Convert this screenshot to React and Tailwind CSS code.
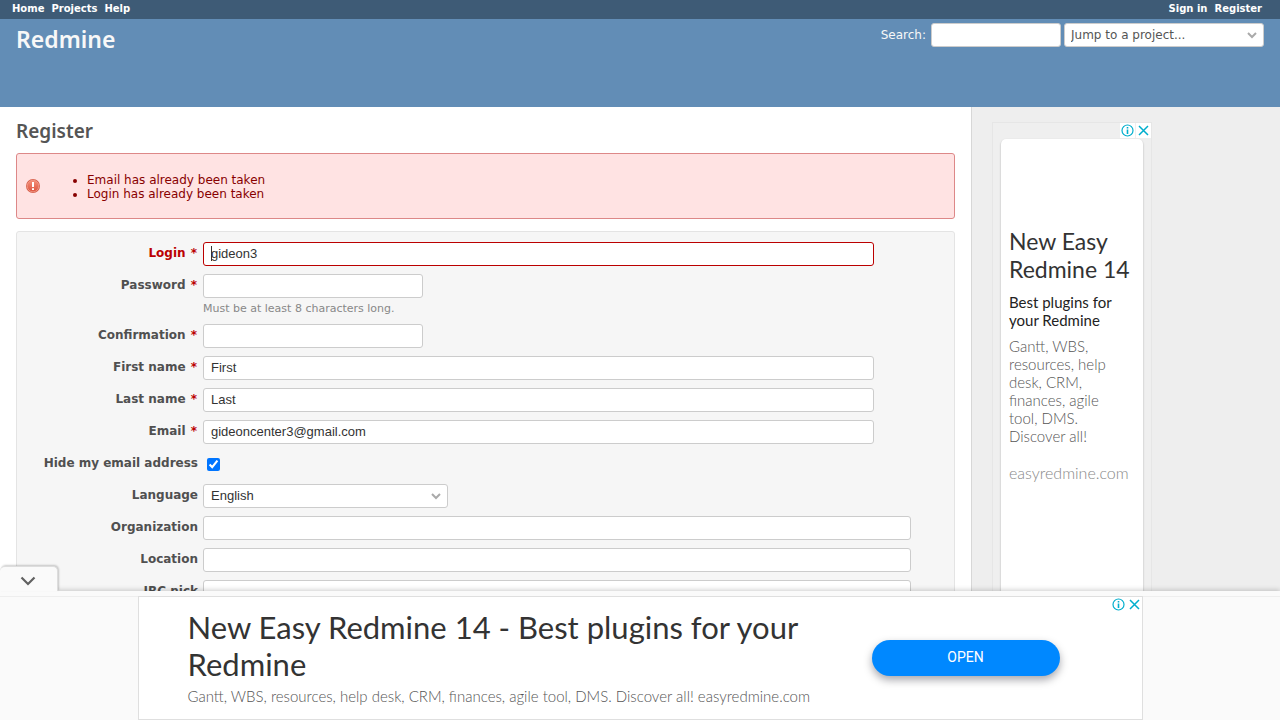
import React from "react";

const fieldBase =
  "block h-6 rounded-[3px] border bg-white px-[7px] font-['Liberation_Sans',Arial,sans-serif] text-[13px] text-[#333333] outline-none";
const textBox = fieldBase + " border-[#cccccc] pb-0.5";
const errorBox = fieldBase + " border-[#bb0000] pb-0.5";

function Row({ id, label, required, error, children }) {
  return (
    <div className="flex items-start gap-[5px]">
      <label
        htmlFor={id}
        className={
          "w-[175px] shrink-0 pt-[3px] text-right text-[12px] leading-4 font-bold whitespace-nowrap " +
          (error ? "text-[#bb0000]" : "text-[#505050]")
        }
      >
        {label}
        {required && <span className="mr-px ml-px text-[#bb0000]"> *</span>}
      </label>
      <div className="relative min-w-0 flex-1">{children}</div>
    </div>
  );
}

function Chevron() {
  return (
    <svg
      className="pointer-events-none absolute top-[7px] right-[7px] h-2.5 w-2.5"
      viewBox="0 0 10 10"
      fill="none"
      stroke="#aaaaaa"
      strokeWidth="2"
      aria-hidden="true"
    >
      <path d="M1 3 L5 7 L9 3" />
    </svg>
  );
}

function AdMarks() {
  return (
    <div className="flex gap-px">
      <button type="button" aria-label="Ad information" className="flex size-[15px] items-center justify-center bg-white">
        <svg width="15" height="15" viewBox="0 0 15 15" fill="none" stroke="#00aecd" aria-hidden="true">
          <circle cx="7.5" cy="7.5" r="5.5" strokeWidth="1.2" />
          <path d="M7.5 6.5 V11" strokeWidth="1.6" />
          <path d="M7.5 4 V5.5" strokeWidth="1.6" />
        </svg>
      </button>
      <button type="button" aria-label="Close ad" className="flex size-[15px] items-center justify-center bg-white">
        <svg width="15" height="15" viewBox="0 0 15 15" fill="none" stroke="#00aecd" strokeWidth="1.5" aria-hidden="true">
          <path d="M3 3 L12 12 M12 3 L3 12" />
        </svg>
      </button>
    </div>
  );
}

export default function App() {
  return (
    <div className="flex h-screen flex-col overflow-hidden bg-[#eeeeee] font-['DejaVu_Sans',Verdana,sans-serif] text-[12px] text-[#333333]">
      <nav className="flex h-[19px] shrink-0 items-center justify-between bg-[#3e5b76] pr-[18px] pb-px pl-3 text-[10px] leading-4 font-bold text-white">
        <div className="flex gap-[7px]">
          <a href="#home">Home</a>
          <a href="#projects">Projects</a>
          <a href="#help">Help</a>
        </div>
        <div className="flex gap-[7px]">
          <a href="#signin">Sign in</a>
          <a href="#register">Register</a>
        </div>
      </nav>

      <header className="flex h-[88px] shrink-0 items-start justify-between bg-[#628db6] px-4 pt-1">
        <h1 className="font-['Noto_Sans',sans-serif] text-[23px] leading-8 font-semibold text-[#f8f8f8]">Redmine</h1>
        <div className="flex items-center">
          <label htmlFor="q" className="mr-[5px] text-[12px] text-[#f8f8f8]">Search:</label>
          <input id="q" className="mr-[3px] h-6 w-[130px] rounded-[3px] border border-[#cccccc] bg-white px-[7px] outline-none" />
          <div className="relative">
            <select
              aria-label="Jump to a project"
              className="block h-6 w-[200px] appearance-none rounded-[3px] border border-[#cccccc] bg-white px-[6px] text-[12px] text-[#555555] outline-none"
            >
              <option>Jump to a project...</option>
            </select>
            <Chevron />
          </div>
        </div>
      </header>

      <div className="flex min-h-0 flex-1 overflow-hidden">
        <main className="min-w-0 flex-1 bg-white px-4 pt-[10px]">
          <h2 className="font-['Noto_Sans',sans-serif] text-[19px] leading-7 font-semibold text-[#555555]">Register</h2>

          <div className="mt-2 flex h-[66px] items-center rounded-[3px] border border-[#dd8888] bg-[#ffe3e3] pl-2 text-[#880000]">
            <svg width="16" height="16" viewBox="0 0 16 16" aria-hidden="true">
              <defs>
                <linearGradient id="alert" x1="0" y1="0" x2="0" y2="1">
                  <stop offset="0" stopColor="#f58f78" />
                  <stop offset="1" stopColor="#dd5540" />
                </linearGradient>
              </defs>
              <circle cx="8" cy="8" r="7" fill="#d8604c" />
              <circle cx="8" cy="8" r="5.8" fill="url(#alert)" stroke="#f4a392" strokeWidth="0.7" />
              <path d="M8 4 V9" stroke="#ffffff" strokeWidth="2" />
              <path d="M8 10.2 V12" stroke="#ffffff" strokeWidth="2" />
            </svg>
            <ul className="ml-[46px] list-disc pt-0.5 text-[12px] leading-[14px]">
              <li>Email has already been taken</li>
              <li>Login has already been taken</li>
            </ul>
          </div>

          <form className="mt-3 flex flex-col gap-2 rounded-[3px] border border-[#e4e4e4] bg-[#f6f6f6] px-[6px] pt-[10px] pb-3">
            <Row id="login" label="Login" required error>
              <input id="login" defaultValue="gideon3" className={errorBox + " w-[90%]"} />
              <span className="pointer-events-none absolute top-1 left-2 h-[15px] w-px bg-[#333333]" />
            </Row>
            <Row id="password" label="Password" required>
              <input id="password" type="password" className={textBox + " w-[220px]"} />
              <em className="block h-[18px] pt-[3px] text-[11px] leading-4 text-[#888888] not-italic">Must be at least 8 characters long.</em>
            </Row>
            <Row id="confirmation" label="Confirmation" required>
              <input id="confirmation" type="password" className={textBox + " w-[220px]"} />
            </Row>
            <Row id="first" label="First name" required>
              <input id="first" defaultValue="First" className={textBox + " w-[90%]"} />
            </Row>
            <Row id="last" label="Last name" required>
              <input id="last" defaultValue="Last" className={textBox + " w-[90%]"} />
            </Row>
            <Row id="email" label="Email" required>
              <input id="email" defaultValue="gideoncenter3@gmail.com" className={textBox + " w-[90%]"} />
            </Row>
            <Row id="hide" label="Hide my email address">
              <div className="flex h-6 items-center pl-1">
                <input id="hide" type="checkbox" defaultChecked className="size-[13px]" />
              </div>
            </Row>
            <Row id="language" label="Language">
              <div className="relative w-[245px]">
                <select id="language" className={fieldBase + " w-full appearance-none border-[#cccccc]"}>
                  <option>English</option>
                </select>
                <Chevron />
              </div>
            </Row>
            <Row id="organization" label="Organization">
              <input id="organization" className={textBox + " w-[95%]"} />
            </Row>
            <Row id="location" label="Location">
              <input id="location" className={textBox + " w-[95%]"} />
            </Row>
            <Row id="irc" label="IRC nick">
              <input id="irc" className={textBox + " w-[95%]"} />
            </Row>
          </form>
        </main>

        <aside className="w-[309px] shrink-0 border-l border-[#d7d7d7] bg-[#eeeeee] pt-[15px] pl-[20px]">
          <div className="w-[160px] border border-[#e6e6e6] bg-[#efefef] font-['Lato',sans-serif]">
            <div className="flex justify-end">
              <AdMarks />
            </div>
            <div className="mx-2 mt-px h-[600px] rounded-[5px] bg-white pt-[88px] pl-2 shadow-[0_1px_2px_rgba(0,0,0,0.3)]">
              <h3 className="text-[23px] leading-7 text-[#333333]">New Easy<br />Redmine 14</h3>
              <p className="mt-[10px] text-[15px] leading-[18px] text-[#222222]">Best plugins for<br />your Redmine</p>
              <p className="mt-2 text-[15px] leading-[18px] font-light text-[#555555]">
                Gantt, WBS,<br />resources, help<br />desk, CRM,<br />finances, agile<br />tool, DMS.<br />Discover all!
              </p>
              <a href="#easyredmine" className="mt-[18px] block text-[16px] leading-5 font-light text-[#888888]">easyredmine.com</a>
            </div>
          </div>
        </aside>
      </div>

      <section aria-label="Advertisement" className="fixed inset-x-0 bottom-0 bg-[#fafafa] pt-[5px] shadow-[0_-1px_5px_rgba(0,0,0,0.2)]">
        <button
          type="button"
          aria-label="Collapse ad"
          className="absolute bottom-full left-0 flex h-[25px] w-[58px] items-center justify-center rounded-t-[5px] border-t border-r border-[#dddddd] bg-[#fafafa] pt-1 pr-px shadow-[1px_-1px_2px_rgba(0,0,0,0.2)]"
        >
          <svg width="16" height="10" viewBox="0 0 16 10" fill="none" stroke="#616161" strokeWidth="2.2" aria-hidden="true">
            <path d="M1.5 1.5 L8 8 L14.5 1.5" />
          </svg>
        </button>
        <div className="border-t border-[#eeeeee]">
          <div className="relative mx-auto -mt-px flex h-[124px] w-[1005px] max-w-full items-start border border-[#dfdfdf] bg-white pr-[82px] pl-[49px] font-['Lato',sans-serif]">
            <div className="min-w-0 flex-1 pt-3">
              <h3 className="text-[31px] leading-[37px] text-[#333333]">
                New Easy Redmine 14 - Best plugins for your<br />Redmine
              </h3>
              <p className="mt-[3px] text-[15px] leading-5 font-light text-[#555555]">
                Gantt, WBS, resources, help desk, CRM, finances, agile tool, DMS. Discover all! easyredmine.com
              </p>
            </div>
            <button
              type="button"
              className="mt-[43px] h-9 w-[188px] shrink-0 rounded-full bg-[#0088ff] pb-px font-['Roboto',sans-serif] text-[14px] text-white shadow-[0_4px_8px_rgba(0,0,20,0.35)]"
            >
              OPEN
            </button>
            <div className="absolute top-0 right-0">
              <AdMarks />
            </div>
          </div>
        </div>
      </section>
    </div>
  );
}
